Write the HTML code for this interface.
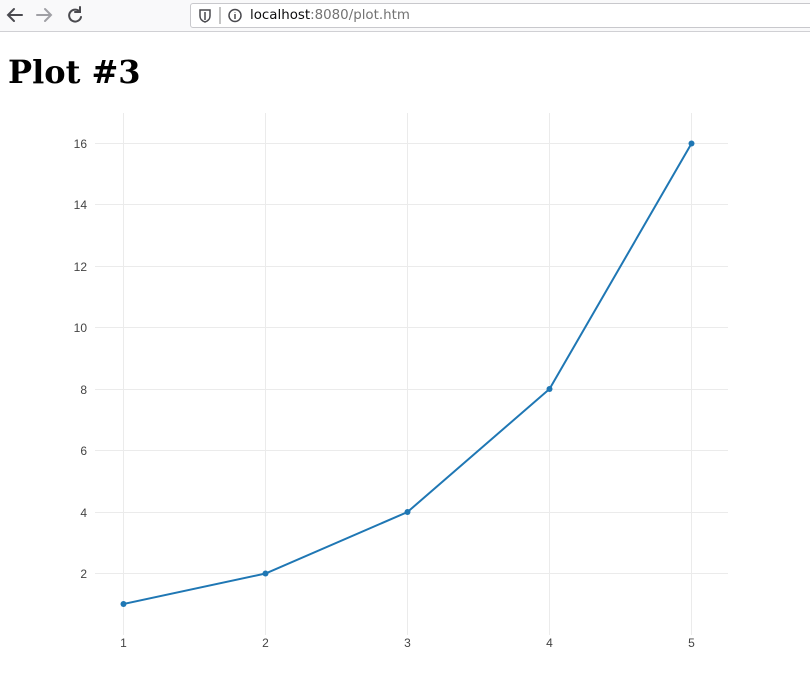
<!DOCTYPE html>
<html><head><style>
body{margin:0;width:810px;height:677px;background:#fff;overflow:hidden;font-family:"Liberation Sans",sans-serif;}
.bar{position:absolute;left:0;top:0;width:810px;height:31px;background:#f9f9fa;border-bottom:1px solid #d0d0d4;}
.url{position:absolute;left:190px;top:3px;width:630px;height:23px;background:#fff;border:1px solid #c8c8cc;border-radius:3px;font-family:"DejaVu Sans",sans-serif;font-size:13.4px;line-height:23px;}
h1{position:absolute;left:8px;top:52px;margin:0;font-family:"DejaVu Serif","Liberation Serif",serif;font-size:32px;font-weight:bold;line-height:40px;}
</style></head><body>
<div class="bar">
<svg width="100" height="31" style="position:absolute;left:0;top:0" fill="none" stroke-width="2" stroke-linecap="round">
<path d="M22 15H8M14 9l-6 6 6 6" stroke="#4a4a4f"/>
<path d="M51 15H37M45 9l6 6-6 6" stroke="#a0a0a5"/>
<path d="M80 12a6 6 0 1 0 1 5M80 7v5h-5" stroke="#4a4a4f"/>
</svg>
<div class="url">
<svg width="60" height="23" style="position:absolute;left:0;top:0" fill="none" stroke="#4a4a4f" stroke-width="1.5">
<path d="M9 6h10v6c0 3-2 5-5 6-3-1-5-3-5-6z"/><path d="M14 8v8" />
<line x1="29" y1="3" x2="29" y2="20" stroke="#888" stroke-width="1"/>
<circle cx="44" cy="11.5" r="6"/><path d="M44 10v5M44 8v0.5"/>
</svg>
<span style="position:absolute;left:59px;top:0;color:#0c0c0d">localhost<span style="color:#737373">:8080/plot.htm</span></span>
</div>
</div>
<h1>Plot #3</h1>
<svg width="810" height="677" style="position:absolute;left:0;top:0" font-family="Liberation Sans,sans-serif" font-size="12" fill="#444">
<g stroke="#ebebeb" stroke-width="1">
<line x1="123.5" y1="113" x2="123.5" y2="635"/><line x1="265.5" y1="113" x2="265.5" y2="635"/><line x1="407.5" y1="113" x2="407.5" y2="635"/><line x1="549.5" y1="113" x2="549.5" y2="635"/><line x1="691.5" y1="113" x2="691.5" y2="635"/>
<line x1="95" y1="573.5" x2="728" y2="573.5"/><line x1="95" y1="512.5" x2="728" y2="512.5"/><line x1="95" y1="450.5" x2="728" y2="450.5"/><line x1="95" y1="389.5" x2="728" y2="389.5"/><line x1="95" y1="327.5" x2="728" y2="327.5"/><line x1="95" y1="266.5" x2="728" y2="266.5"/><line x1="95" y1="204.5" x2="728" y2="204.5"/><line x1="95" y1="143.5" x2="728" y2="143.5"/>
</g>
<g text-anchor="end">
<text x="87" y="578">2</text><text x="87" y="517">4</text><text x="87" y="455">6</text><text x="87" y="394">8</text><text x="87" y="332">10</text><text x="87" y="271">12</text><text x="87" y="209">14</text><text x="87" y="148">16</text>
</g>
<g text-anchor="middle">
<text x="123.5" y="647">1</text><text x="265.5" y="647">2</text><text x="407.5" y="647">3</text><text x="549.5" y="647">4</text><text x="691.5" y="647">5</text>
</g>
<polyline points="123.5,604 265.5,573.5 407.5,512 549.5,389 691.5,143.5" fill="none" stroke="#1f77b4" stroke-width="2"/>
<g fill="#1f77b4"><circle cx="123.5" cy="604" r="3"/><circle cx="265.5" cy="573.5" r="3"/><circle cx="407.5" cy="512" r="3"/><circle cx="549.5" cy="389" r="3"/><circle cx="691.5" cy="143.5" r="3"/></g>
</svg>
</body></html>
